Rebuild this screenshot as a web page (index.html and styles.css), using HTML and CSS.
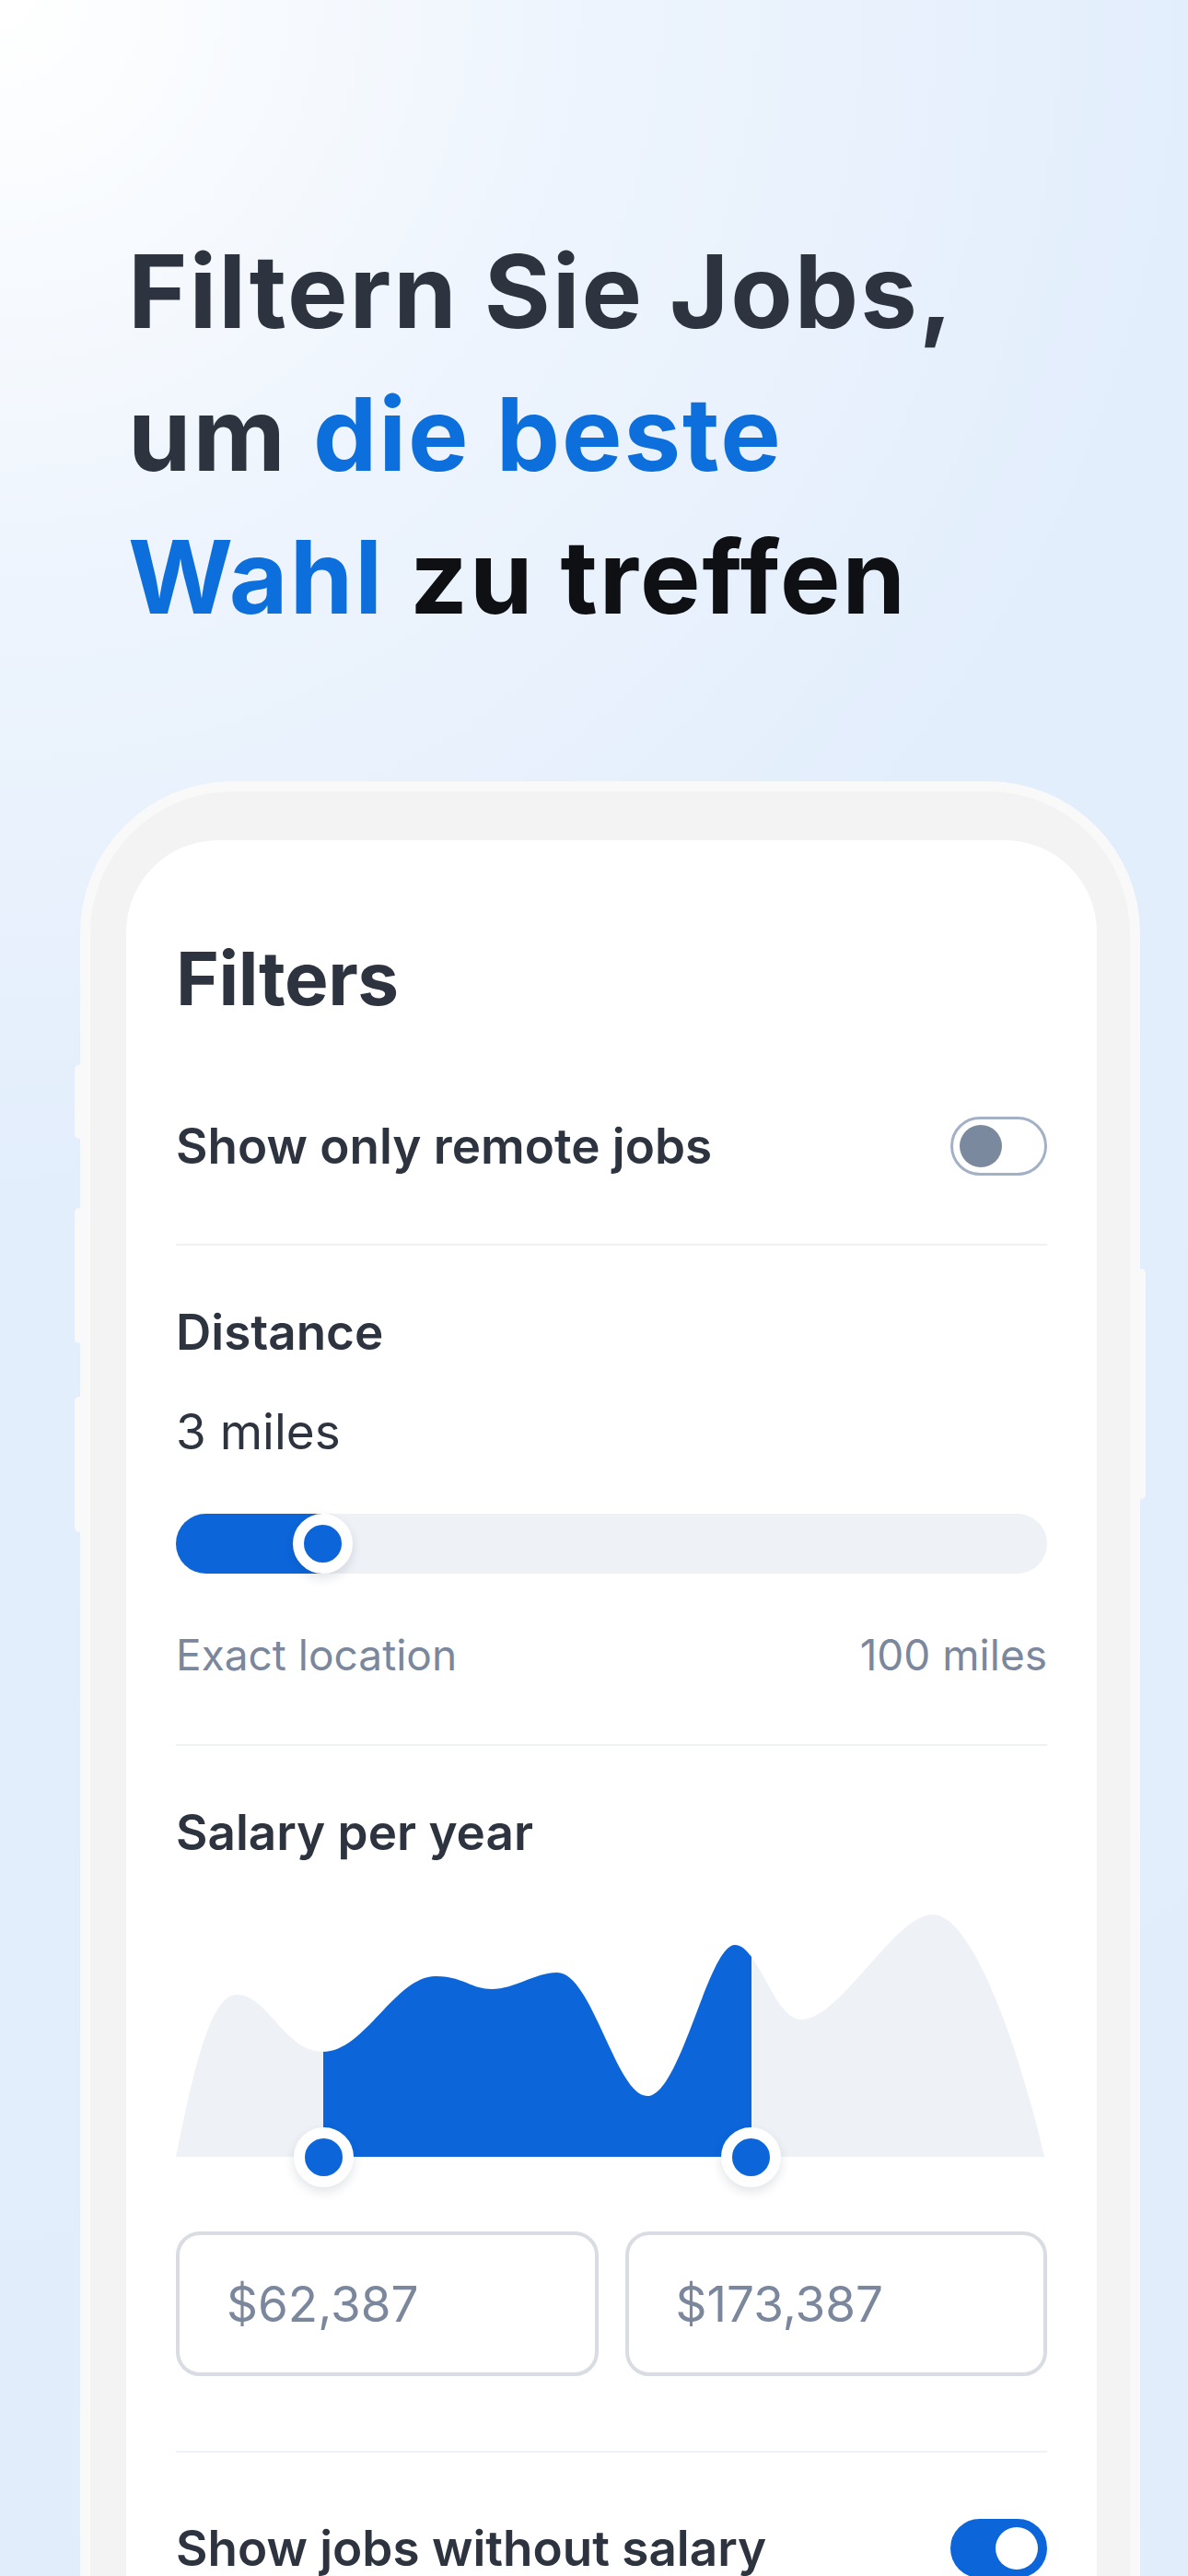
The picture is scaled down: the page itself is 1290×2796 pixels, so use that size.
FILE: index.html
```html
<!DOCTYPE html>
<html lang="de">
<head>
  <meta charset="UTF-8" />
  <meta name="viewport" content="width=device-width, initial-scale=1.0" />
  <title>Filter</title>
  <link rel="stylesheet" href="styles.css">
</head>
<body>
  <div class="hero">
    <h1 class="headline">
      Filtern Sie Jobs,<br>
      um <span class="accent">die beste</span><br>
      <span class="accent">Wahl</span> <span class="ink">zu treffen</span>
    </h1>
  </div>

  <div class="phone">
    <span class="side-btn btn-mute"></span>
    <span class="side-btn btn-up"></span>
    <span class="side-btn btn-down"></span>
    <span class="side-btn btn-power"></span>

    <div class="screen">
      <h2 class="screen-title">Filters</h2>

      <div class="toggle-row top-row">
        <span class="label">Show only remote jobs</span>
        <span class="switch"><span class="knob"></span></span>
      </div>

      <div class="divider"></div>

      <div class="label section-label">Distance</div>
      <div class="value">3 miles</div>
      <div class="slider">
        <div class="slider-fill" style="width: 159px"></div>
        <span class="thumb" style="left: 159px"></span>
      </div>
      <div class="range-labels">
        <span>Exact location</span>
        <span>100 miles</span>
      </div>

      <div class="divider divider-distance"></div>

      <div class="label section-label">Salary per year</div>
      <div class="chart">
        <svg width="946" height="300" viewBox="0 0 946 300">
          <defs>
            <clipPath id="range">
              <rect x="160" y="0" width="465" height="300" />
            </clipPath>
          </defs>
          <path fill="#eef1f6" d="M0 300 C 22 190, 40 124, 66 124 C 100 124, 118 186, 160 186 C 205 186, 238 104, 282 104 C 312 104, 320 118, 343 118 C 368 118, 390 100, 414 100 C 452 100, 478 234, 512 234 C 548 234, 578 70, 607 70 C 632 70, 650 151, 679 151 C 722 151, 780 37, 822 37 C 866 37, 918 190, 943 300 Z" />
          <path fill="#0c66da" clip-path="url(#range)" d="M0 300 C 22 190, 40 124, 66 124 C 100 124, 118 186, 160 186 C 205 186, 238 104, 282 104 C 312 104, 320 118, 343 118 C 368 118, 390 100, 414 100 C 452 100, 478 234, 512 234 C 548 234, 578 70, 607 70 C 632 70, 650 151, 679 151 C 722 151, 780 37, 822 37 C 866 37, 918 190, 943 300 Z" />
        </svg>
        <span class="thumb chart-thumb" style="left: 160px"></span>
        <span class="thumb chart-thumb" style="left: 624px"></span>
      </div>

      <div class="salary-inputs">
        <div class="salary-box">$62,387</div>
        <div class="salary-box">$173,387</div>
      </div>

      <div class="divider divider-salary"></div>

      <div class="toggle-row bottom-row">
        <span class="label">Show jobs without salary</span>
        <span class="switch on"><span class="knob"></span></span>
      </div>
    </div>
  </div>
</body>
</html>
```

FILE: styles.css
```css
body {
  margin: 0;
  width: 1290px;
  height: 2796px;
  overflow: hidden;
  background: radial-gradient(circle at 0 0, #ffffff 0, #edf4fd 650px, #e3eefc 1300px, #e2edfc 100%);
  font-family: 'Inter', 'Roboto', sans-serif;
  color: #2d3440;
}

.hero {
  padding: 239px 0 0 139px;
}

.headline {
  margin: 0;
  font-family: 'Inter', sans-serif;
  font-size: 110px;
  font-weight: 700;
  line-height: 155px;
  letter-spacing: 2px;
  color: #2d3440;
}

.headline .accent {
  color: #0d6fdb;
}

.headline .ink {
  color: #0e1013;
}

.phone {
  position: relative;
  width: 1151px;
  box-sizing: border-box;
  margin: 144px 0 0 87px;
  border: 11px solid #f9f9f9;
  border-bottom: none;
  border-radius: 165px 165px 0 0;
  background: #f3f3f3;
  padding: 53px 36px 0 39px;
  height: 2000px;
}

.side-btn {
  position: absolute;
  width: 10px;
  background: #f9f9f9;
  border-radius: 5px;
  z-index: -1;
}

.btn-mute { left: -17px; top: 297px; height: 80px; }
.btn-up { left: -17px; top: 452px; height: 147px; }
.btn-down { left: -17px; top: 657px; height: 147px; }
.btn-power { right: -17px; top: 518px; height: 250px; }

.screen {
  background: #fff;
  border-radius: 100px 100px 0 0;
  padding: 103px 54px 0 54px;
  height: 1950px;
}

.screen-title {
  margin: 0;
  font-size: 80px;
  font-weight: 700;
  line-height: 94px;
  letter-spacing: -0.5px;
}

.label {
  font-size: 53px;
  font-weight: 600;
  line-height: 64px;
  color: #2d3440;
}

.toggle-row {
  display: flex;
  justify-content: space-between;
  align-items: center;
  height: 64px;
}

.top-row { margin-top: 103px; }
.bottom-row { margin-top: 72px; }

.switch {
  display: flex;
  align-items: center;
  box-sizing: border-box;
  width: 105px;
  height: 64px;
  padding: 0 7px;
  border: 3px solid #a2b1c6;
  border-radius: 32px;
}

.switch .knob {
  width: 46px;
  height: 46px;
  border-radius: 50%;
  background: #7b899f;
}

.switch.on {
  justify-content: flex-end;
  background: #0c66da;
  border-color: #0c66da;
}

.switch.on .knob {
  background: #fff;
}

.divider {
  height: 2px;
  background: #eef1f5;
  margin-top: 74px;
}

.divider-distance { margin-top: 68px; }
.divider-salary { margin-top: 81px; }

.section-label {
  margin-top: 62px;
}

.value {
  margin-top: 46px;
  font-size: 53px;
  line-height: 60px;
  color: #2d3440;
}

.slider {
  position: relative;
  margin-top: 59px;
  height: 65px;
  border-radius: 33px;
  background: #eef1f6;
}

.slider-fill {
  height: 100%;
  border-radius: 33px 0 0 33px;
  background: #0c66da;
}

.thumb {
  position: absolute;
  top: 0;
  width: 41px;
  height: 41px;
  margin-left: -32.5px;
  border: 12px solid #fff;
  border-radius: 50%;
  background: #0c66da;
  box-shadow: 0 5px 12px rgba(20, 30, 50, 0.12);
}

.range-labels {
  display: flex;
  justify-content: space-between;
  margin-top: 59px;
  font-size: 46px;
  line-height: 58px;
  color: #7b879c;
}

.chart {
  position: relative;
  margin-top: 20px;
  height: 300px;
}

.chart svg {
  display: block;
  overflow: visible;
}

.chart-thumb {
  top: 267.5px;
}

.salary-inputs {
  display: grid;
  grid-template-columns: 1fr 1fr;
  gap: 29px;
  margin-top: 81px;
}

.salary-box {
  box-sizing: border-box;
  height: 157px;
  padding-left: 51px;
  border: 4px solid #d9dde3;
  border-radius: 26px;
  display: flex;
  align-items: center;
  font-size: 53px;
  line-height: 64px;
  color: #7b879c;
}
```
